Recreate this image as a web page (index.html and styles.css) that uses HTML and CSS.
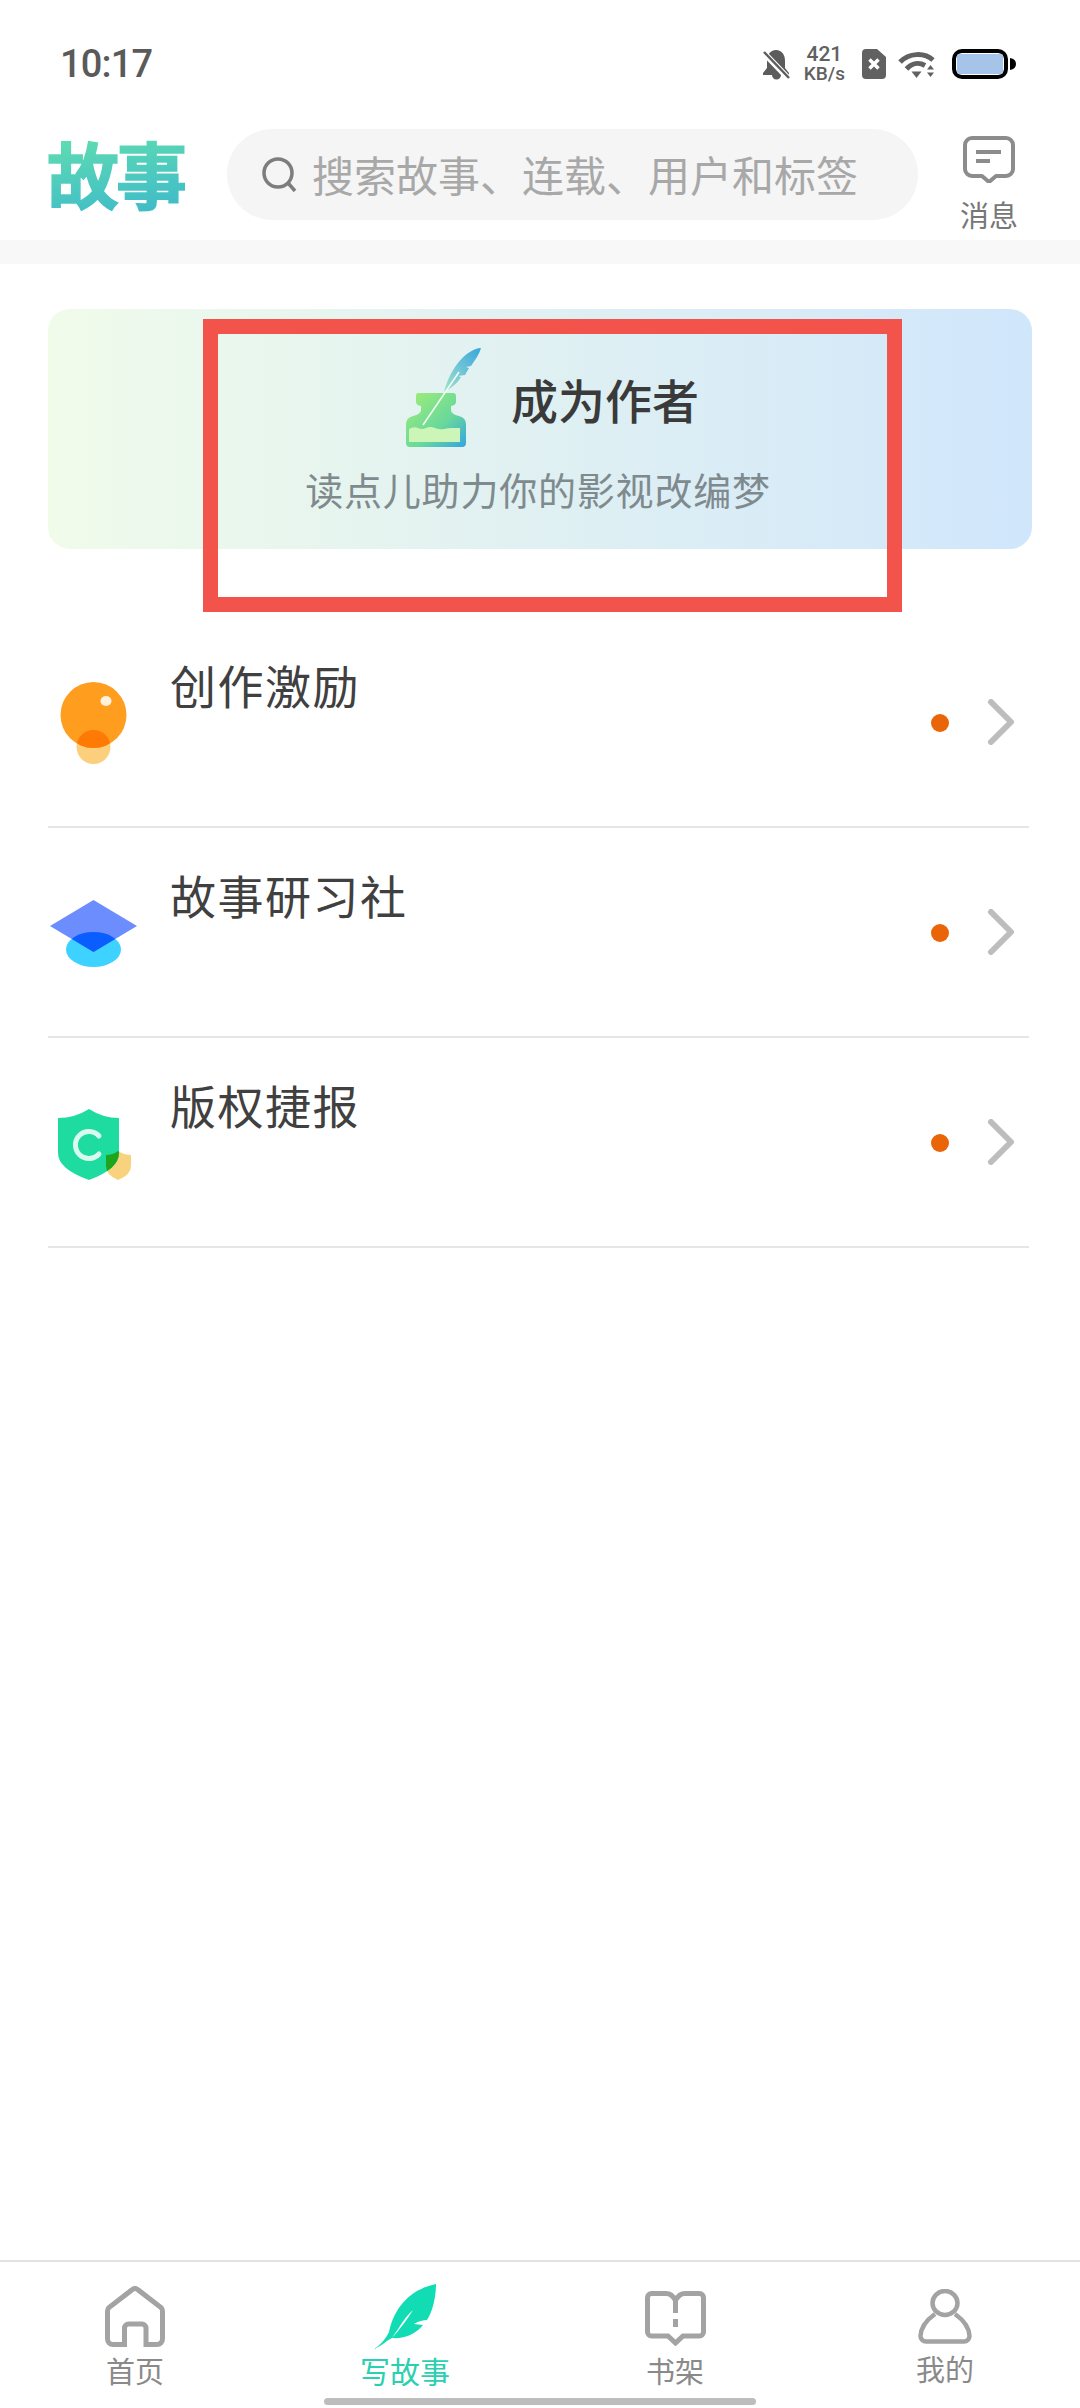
FILE: index.html
```html
<!DOCTYPE html>
<html lang="zh-CN">
<head>
  <meta charset="UTF-8" />
  <meta name="viewport" content="width=device-width, initial-scale=1.0" />
  <title>写故事</title>
  <link rel="stylesheet" href="styles.css">
</head>
<body>
  <div class="status-bar">
    <span class="time">10:17</span>
    <div class="status-icons">
      <svg width="27" height="31" viewBox="0 0 27 31">
        <path d="M13 1C7 1 4 6 4 12v7l-4 5v2h9a4.5 4.5 0 0 0 9 0h8v-2l-4-5v-7c0-6-3-11-9-11z" fill="#5c5c5c"/>
        <path d="M0 3l26 27" stroke="#fff" stroke-width="6"/>
        <path d="M1 3l25 26" stroke="#5c5c5c" stroke-width="2.5"/>
      </svg>
      <div class="speed"><span class="speed-num">421</span><span class="speed-unit">KB/s</span></div>
      <svg class="sim" width="24" height="30" viewBox="0 0 24 30">
        <path d="M4 0h11l9 8v18a4 4 0 0 1-4 4H4a4 4 0 0 1-4-4V4a4 4 0 0 1 4-4z" fill="#616161"/>
        <path d="M7.500 10.500l9 9M16.500 10.500l-9 9" stroke="#fff" stroke-width="3.500"/>
      </svg>
      <svg class="wifi" width="37" height="28" viewBox="0 0 37 28">
        <path d="M2 12C11 3 26 2 35 10" fill="none" stroke="#616161" stroke-width="5"/>
        <path d="M8.500 19C14 13 21 12 27 15.500" fill="none" stroke="#616161" stroke-width="5"/>
        <path d="M13.500 21.500h10l-5 6.500z" fill="#616161"/>
        <path d="M29 19.500l3.500-4.500 3.500 4.500zM29 22.500h7l-3.500 4.500z" fill="#616161"/>
      </svg>
      <svg class="battery" width="64" height="30" viewBox="0 0 64 30">
        <rect x="2" y="2" width="52" height="26" rx="8" fill="#fff" stroke="#000" stroke-width="4"/>
        <rect x="5" y="5" width="46" height="20" rx="2" fill="#a6c4ea"/>
        <path d="M58 9q6 1 6 6t-6 6z" fill="#000"/>
      </svg>
    </div>
  </div>

  <header class="top-bar">
    <div class="logo">故事</div>
    <div class="search">
      <svg width="35" height="35" viewBox="0 0 35 35">
        <circle cx="16" cy="16" r="14" fill="none" stroke="#7d7d7d" stroke-width="3.500"/>
        <path d="M26 26l7 8" stroke="#7d7d7d" stroke-width="3.500"/>
      </svg>
      <span class="search-text">搜索故事、连载、用户和标签</span>
    </div>
    <div class="msg">
      <svg width="52" height="47" viewBox="0 0 52 47">
        <path d="M9 2h34a7 7 0 0 1 7 7v24a7 7 0 0 1-7 7H33l-7 6-7-6H9a7 7 0 0 1-7-7V9a7 7 0 0 1 7-7z" fill="none" stroke="#8c8c8c" stroke-width="4" stroke-linejoin="round"/>
        <path d="M13 16h25M13 25h14" stroke="#8c8c8c" stroke-width="4"/>
      </svg>
      <span class="msg-text">消息</span>
    </div>
  </header>

  <div class="band"></div>

  <section class="banner">
    <div class="banner-top">
      <svg width="77" height="99" viewBox="26 18 77 99">
        <defs>
          <linearGradient id="ink" x1="0" y1="0" x2="1" y2="1">
            <stop offset="0" stop-color="#a2ee74"/>
            <stop offset="0.6" stop-color="#68d89c"/>
            <stop offset="1" stop-color="#34a4e2"/>
          </linearGradient>
          <linearGradient id="quill" x1="1" y1="0" x2="0" y2="1">
            <stop offset="0" stop-color="#38a6dc"/>
            <stop offset="1" stop-color="#a5e2cf"/>
          </linearGradient>
        </defs>
        <path d="M39 63H74q3 0 3 3v6q0 3-5 4v4q0 4 8 6 7 2 7 8v19q0 4-4 4H31q-4 0-4-4V94q0-6 7-8 8-2 8-6v-4q-5-1-5-4v-6q0-3 2-3z" fill="url(#ink)"/>
        <path d="M30 99q5-3 9-1t8 0 9 0 9 1 8-1 8 0v14H30z" fill="#cdf5b8"/>
        <path d="M102 18c-14 1-30 18-37 44 6-3 13-8 17-15l-3-1 7-1 4-7-3-1 5-1 6-9q3-5 4-9z" fill="url(#quill)"/>
        <path d="M80 42L44 95" stroke="#f2fff5" stroke-width="1.500" fill="none"/>
      </svg>
      <h2 class="banner-title">成为作者</h2>
    </div>
    <p class="banner-sub">读点儿助力你的影视改编梦</p>
  </section>

  <div class="red-box"></div>

  <ul class="list">
    <li class="row">
      <svg class="row-icon" width="90" height="90" viewBox="0 0 90 90">
        <defs>
          <clipPath id="bulb"><circle cx="45.500" cy="38" r="33"/></clipPath>
          <clipPath id="cap"><ellipse cx="45.500" cy="62.500" rx="27.500" ry="17.500"/></clipPath>
          <clipPath id="shield"><path d="M41 12q14 9 30 9v35q0 16-30 27-31-11-31-27V21q17 0 31-9z"/></clipPath>
        </defs>
        <circle cx="45.500" cy="70" r="17" fill="#fbcf7c"/>
        <circle cx="45.500" cy="38" r="33" fill="#ff9d1e"/>
        <circle cx="45.500" cy="70" r="17" fill="#ff7a05" clip-path="url(#bulb)"/>
        <ellipse cx="58" cy="24" rx="5.500" ry="5" fill="#fff2dc"/>
      </svg>
      <span class="row-text">创作激励</span>
      <span class="dot"></span>
      <svg class="chevron" width="30" height="46" viewBox="0 0 30 46"><path d="M5 3l20 20L5 43" fill="none" stroke="#bdbdbd" stroke-width="6" stroke-linecap="round" stroke-linejoin="round"/></svg>
    </li>
    <li class="row">
      <svg class="row-icon" width="90" height="90" viewBox="0 0 90 90">
        <ellipse cx="45.500" cy="62.500" rx="27.500" ry="17.500" fill="#3dd2ff"/>
        <path d="M2 39L45.500 13 89 39 45.500 65z" fill="#6c8dfd"/>
        <path d="M2 39L45.500 13 89 39 45.500 65z" fill="#0a5dff" clip-path="url(#cap)"/>
      </svg>
      <span class="row-text">故事研习社</span>
      <span class="dot"></span>
      <svg class="chevron" width="30" height="46" viewBox="0 0 30 46"><path d="M5 3l20 20L5 43" fill="none" stroke="#bdbdbd" stroke-width="6" stroke-linecap="round" stroke-linejoin="round"/></svg>
    </li>
    <li class="row">
      <svg class="row-icon" width="90" height="90" viewBox="0 0 90 90">
        <path d="M70 54q6 4 13 4v11q0 9-13 14-12-5-12-14V58q7 0 12-4z" fill="#f8d27c"/>
        <path d="M41 12q14 9 30 9v35q0 16-30 27-31-11-31-27V21q17 0 31-9z" fill="#1edb9f"/>
        <path d="M70 54q6 4 13 4v11q0 9-13 14-12-5-12-14V58q7 0 12-4z" fill="#1ea51c" clip-path="url(#shield)"/>
        <path d="M51 39A13.500 13.500 0 1 0 51 57" fill="none" stroke="#d8fbee" stroke-width="5" stroke-linecap="round"/>
      </svg>
      <span class="row-text">版权捷报</span>
      <span class="dot"></span>
      <svg class="chevron" width="30" height="46" viewBox="0 0 30 46"><path d="M5 3l20 20L5 43" fill="none" stroke="#bdbdbd" stroke-width="6" stroke-linecap="round" stroke-linejoin="round"/></svg>
    </li>
  </ul>

  <nav class="tab-bar">
    <div class="tabs">
      <div class="tab">
        <div class="tab-icon">
          <svg width="60" height="61" viewBox="0 0 60 61">
            <path d="M19.500 58.500H8A5.500 5.500 0 0 1 2.500 53V25a5 5 0 0 1 1.200-3.200L27 3.800a4 4 0 0 1 6 0L56.300 21.800A5 5 0 0 1 57.500 25V53a5.500 5.500 0 0 1-5.500 5.500H41V42a4 4 0 0 0-4-4H23.500a4 4 0 0 0-4 4z" fill="none" stroke="#a3a3a3" stroke-width="5"/>
          </svg>
        </div>
        <span class="tab-label">首页</span>
      </div>
      <div class="tab active">
        <div class="tab-icon">
          <svg width="63" height="67" viewBox="14 8 63 67">
            <path d="M76 9C52 14 35 30 29 57c-2 5-9 14-15 17 8-3 13-9 18-11 9-13 13-21 21-28-6 10-14 20-21 28 12 1 24-4 31-13l-9-1c5-3 9-4 13-4 6-9 9-24 9-36z" fill="#12dcb4"/>
          </svg>
        </div>
        <span class="tab-label">写故事</span>
      </div>
      <div class="tab">
        <div class="tab-icon book">
          <svg width="61" height="55" viewBox="15 12 61 55">
            <path d="M21.500 14.500H36q6 0 9.500 7 3.500-7 9.500-7h14.500a4 4 0 0 1 4 4V53a4 4 0 0 1-4 4H53l-7.500 7-7.500-7H21.500a4 4 0 0 1-4-4V18.500a4 4 0 0 1 4-4z" fill="none" stroke="#a3a3a3" stroke-width="5"/>
            <path d="M45.500 22v12M45.500 40v8" stroke="#a3a3a3" stroke-width="5"/>
          </svg>
        </div>
        <span class="tab-label">书架</span>
      </div>
      <div class="tab">
        <div class="tab-icon">
          <svg width="54" height="55" viewBox="0 0 54 55">
            <ellipse cx="27" cy="14" rx="12.500" ry="12" fill="none" stroke="#a3a3a3" stroke-width="4.500"/>
            <path d="M17 25Q3 35 2.500 47a5.500 5.500 0 0 0 5.500 5.500h38a5.500 5.500 0 0 0 5.500-5.500Q51 35 37 25" fill="none" stroke="#a3a3a3" stroke-width="4.500"/>
          </svg>
        </div>
        <span class="tab-label mine">我的</span>
      </div>
    </div>
    <div class="home-bar"></div>
  </nav>
</body>
</html>
```

FILE: styles.css
```css
html, body {
  margin: 0;
  padding: 0;
}
body {
  position: relative;
  width: 1080px;
  height: 2408px;
  overflow: hidden;
  display: flex;
  flex-direction: column;
  background: #fff;
  font-family: "Noto Sans CJK SC", "Noto Sans", sans-serif;
}
svg {
  display: block;
  flex-shrink: 0;
}

/* status bar */
.status-bar {
  height: 118px;
  box-sizing: border-box;
  padding: 10px 64px 0 60px;
  display: flex;
  align-items: center;
  justify-content: space-between;
}
.time {
  font-family: Roboto, sans-serif;
  font-size: 38px;
  font-weight: 500;
  letter-spacing: -0.8px;
  color: #5a5a5a;
}
.status-icons {
  display: flex;
  align-items: center;
  gap: 14px;
}
.speed {
  display: flex;
  flex-direction: column;
  align-items: center;
  font-family: Roboto, sans-serif;
  font-weight: 500;
  color: #616161;
}
.speed-num {
  font-size: 21px;
  line-height: 19px;
}
.speed-unit {
  font-size: 19px;
  line-height: 19px;
}
.sim {
  margin-left: 3px;
}
.wifi {
  margin-left: -2px;
}
.battery {
  margin-left: 3px;
}

/* search header */
.top-bar {
  height: 122px;
  box-sizing: border-box;
  padding: 0 0 9px 48px;
  display: flex;
  align-items: center;
}
.logo {
  width: 138px;
  margin: -5px 0 0 -1px;
  font-size: 72px;
  line-height: 80px;
  font-weight: 700;
  letter-spacing: -3px;
  white-space: nowrap;
  color: transparent;
  background: linear-gradient(170deg, #62e0ae, #3db9cb);
  -webkit-background-clip: text;
  background-clip: text;
  -webkit-text-stroke: 1.5px transparent;
}
.search {
  width: 691px;
  height: 91px;
  margin-left: 42px;
  padding-left: 35px;
  box-sizing: border-box;
  display: flex;
  align-items: center;
  gap: 15px;
  border-radius: 46px;
  background: #f5f5f5;
}
.search-text {
  padding-bottom: 3px;
  font-size: 42px;
  color: #a8a8a8;
  white-space: nowrap;
}
.msg {
  width: 56px;
  margin: 19px 0 0 43px;
  display: flex;
  flex-direction: column;
  align-items: center;
}
.msg svg {
  margin-bottom: 13px;
}
.msg-text {
  font-size: 29px;
  line-height: 36px;
  color: #777;
  white-space: nowrap;
}
.band {
  height: 24px;
  background: #f8f8f8;
}

/* banner */
.banner {
  height: 240px;
  margin: 45px 48px 0;
  padding-top: 39px;
  box-sizing: border-box;
  display: flex;
  flex-direction: column;
  align-items: center;
  border-radius: 22px;
  background: linear-gradient(90deg, #f0fbea, #d0e6fb);
}
.banner-top {
  display: flex;
  align-items: center;
  gap: 29px;
  margin-left: 24px;
}
.banner-title {
  margin: 3px 0 0;
  font-size: 47px;
  line-height: 60px;
  font-weight: 500;
  color: #3a3a3a;
}
.banner-sub {
  margin: 17px 4px 0 0;
  font-size: 38px;
  line-height: 50px;
  letter-spacing: 0.8px;
  color: #7f8a8e;
}
.red-box {
  position: absolute;
  left: 203px;
  top: 319px;
  width: 699px;
  height: 293px;
  box-sizing: border-box;
  border: 15px solid #f2544c;
}

/* list */
.list {
  list-style: none;
  margin: 69px 51px 0 48px;
  padding: 0;
}
.row {
  height: 210px;
  box-sizing: border-box;
  padding-right: 13px;
  display: flex;
  align-items: center;
  border-bottom: 2px solid #e6e6e6;
}
.row-icon {
  margin-right: 32px;
}
.row-text {
  flex: 1;
  align-self: flex-start;
  padding-top: 36px;
  font-size: 46px;
  line-height: 60px;
  letter-spacing: 1.5px;
  color: #404040;
}
.dot {
  width: 18px;
  height: 18px;
  margin: 1px 37px 0 0;
  border-radius: 50%;
  background: #ea6408;
}

/* bottom tabs */
.tab-bar {
  margin-top: auto;
  border-top: 2px solid #e2e2e2;
}
.tabs {
  display: grid;
  grid-template-columns: repeat(4, 270px);
  padding-top: 21px;
}
.tab {
  display: flex;
  flex-direction: column;
  align-items: center;
}
.tab-icon {
  height: 67px;
  display: flex;
  align-items: center;
  justify-content: center;
}
.tab-icon.book {
  padding-top: 4px;
  box-sizing: border-box;
}
.tab-label {
  margin: 2px 0 3px;
  font-size: 29px;
  line-height: 36px;
  color: #8a8a8a;
}
.tab-label.mine {
  margin: 0 0 5px;
}
.active .tab-label {
  font-size: 30px;
  color: #2bd0b0;
}
.home-bar {
  width: 432px;
  height: 7px;
  margin: 7px auto 3px;
  border-radius: 4px;
  background: #bdbdbd;
}
```
